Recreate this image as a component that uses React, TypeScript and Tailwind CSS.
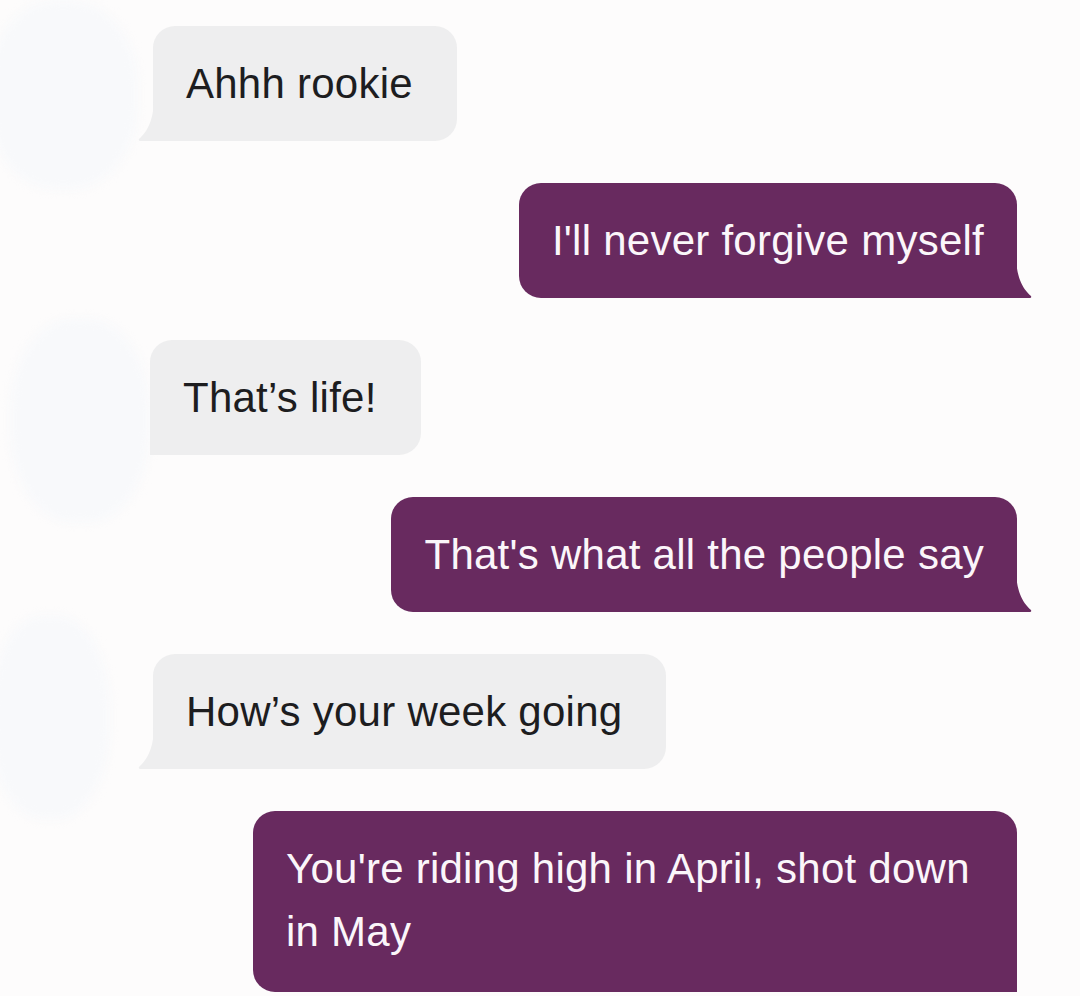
import React from "react"

type Msg = { id: number; text: string; mine: boolean; tail: "curve" | "square" | "cut" }

const messages: Msg[] = [
  { id: 1, text: "Ahhh rookie", mine: false, tail: "curve" },
  { id: 2, text: "I'll never forgive myself", mine: true, tail: "curve" },
  { id: 3, text: "That’s life!", mine: false, tail: "square" },
  { id: 4, text: "That's what all the people say", mine: true, tail: "curve" },
  { id: 5, text: "How’s your week going", mine: false, tail: "curve" },
  { id: 6, text: "You're riding high in April, shot down in May", mine: true, tail: "cut" },
]

// smudged-out avatar next to each incoming message
const blobs: Record<number, string> = {
  1: "left-[-12px] top-[-26px] h-[190px] w-[150px]",
  3: "left-[10px] top-[-22px] h-[205px] w-[140px]",
  5: "left-[-10px] top-[-39px] h-[205px] w-[120px]",
}

function TheirTail() {
  return (
    <svg className="absolute bottom-0 left-[-15px]" width="16" height="44" viewBox="0 0 16 44">
      <path d="M16 0 C16 22 10 34 1 42 Q0 44 3 44 L16 44 Z" fill="#eeeeef" />
    </svg>
  )
}

function MyTail() {
  return (
    <svg className="absolute bottom-0 right-[-15px]" width="16" height="44" viewBox="0 0 16 44">
      <path d="M0 0 C0 22 6 34 15 42 Q16 44 13 44 L0 44 Z" fill="#682a5f" />
    </svg>
  )
}

function Bubble({ msg }: { msg: Msg }) {
  const base = "relative pt-[26px] text-[42px] leading-[63px] tracking-[0.25px]"
  if (msg.mine) {
    return (
      <div
        className={`${base} max-w-[764px] px-[33px] rounded-[22px] rounded-br-none bg-[#682a5f] text-[#fbf6fa] ${msg.tail === "cut" ? "pb-[29px]" : "pb-[26px]"}`}
      >
        {msg.text}
        {msg.tail === "curve" && <MyTail />}
      </div>
    )
  }
  return (
    <div className={`${base} pb-[26px] pl-[33px] pr-[44px] rounded-[22px] rounded-bl-none bg-[#eeeeef] text-[#1d1d1f]`}>
      {msg.text}
      {msg.tail === "curve" && <TheirTail />}
    </div>
  )
}

export default function App() {
  return (
    <div
      className="h-[996px] w-[1080px] overflow-hidden bg-[#fdfcfc] pt-[26px]"
      style={{ fontFamily: '"Liberation Sans", Arial, sans-serif' }}
    >
      <div className="flex flex-col gap-[42px]">
        {messages.map((m) =>
          m.mine ? (
            <div key={m.id} className="flex justify-end pr-[63px]">
              <Bubble msg={m} />
            </div>
          ) : (
            <div key={m.id} className="flex">
              <div className={`relative shrink-0 ${m.tail === "square" ? "w-[150px]" : "w-[153px]"}`}>
                <div className={`absolute rounded-[45%] bg-[#f8f9fb] blur-[5px] ${blobs[m.id]}`} />
              </div>
              <Bubble msg={m} />
            </div>
          )
        )}
      </div>
    </div>
  )
}
